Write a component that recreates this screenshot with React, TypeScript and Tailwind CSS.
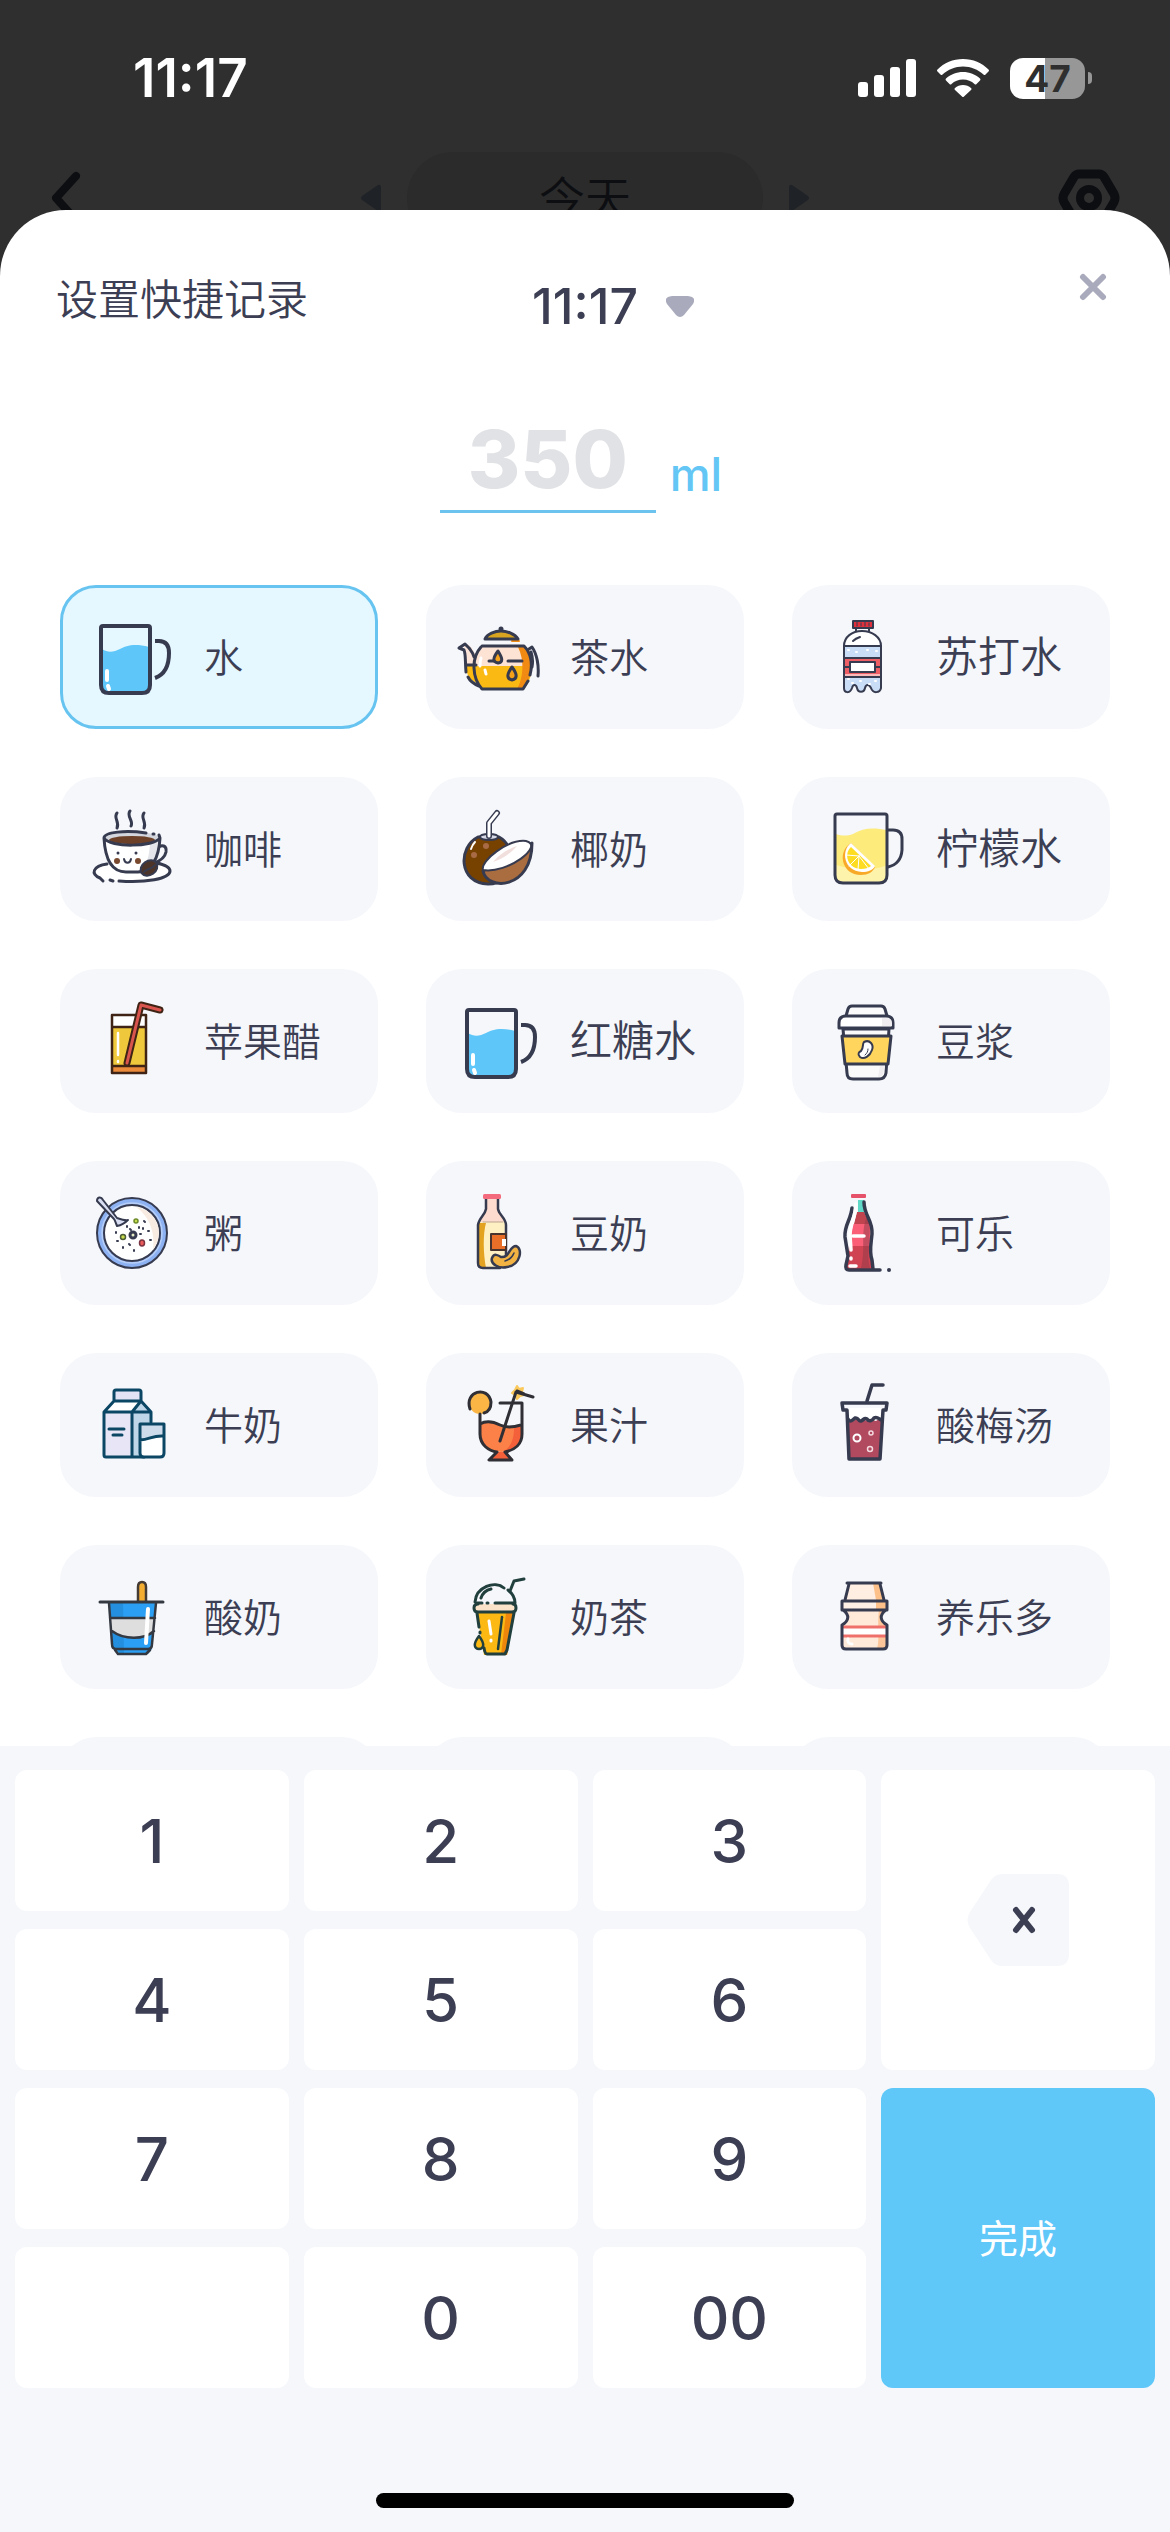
import { useState } from "react";
import type { ReactNode } from "react";
import { clsx } from "clsx";

const INK = "#373b50";

function Icon({ children }: { children: ReactNode }) {
  return (
    <svg
      viewBox="0 0 84 84"
      className="size-[84px] shrink-0"
      fill="none"
      strokeLinecap="round"
      strokeLinejoin="round"
      aria-hidden="true"
    >
      {children}
    </svg>
  );
}

function WaterIcon() {
  return (
    <Icon>
      <path d="M12 34c6 4 12 3 18 0s14-6 29-2v38q0 8-8 8H20q-8 0-8-8z" fill="#5ec6f8" />
      <path d="M11 13q0-2 2-2h45q2 0 2 2v57q0 8-8 8H19q-8 0-8-8z" stroke={INK} strokeWidth="4" />
      <path d="M65 26h4q10 0 10 12 0 20-14 25" stroke={INK} strokeWidth="4" strokeLinecap="butt" />
      <path d="M17 56v9M18 71l1 3" stroke="#fff" strokeWidth="4" />
    </Icon>
  );
}

function TeaIcon() {
  return (
    <Icon>
      <path d="M7 31c4 3 3 13 4 20h8V39c-2-5-5-9-8-10z" fill="#fbe3d8" />
      <path d="M10 51h9l4 18c-8-3-13-8-13-18z" fill="#fbb912" />
      <path d="M25 31h43c4 5 8 12 7 20H18c-1-8 3-15 7-20z" fill="#fde3d4" />
      <path d="M18 51h57c1 9-2 17-7 23H26c-5-6-8-14-8-23z" fill="#fbba13" />
      <path d="M62 32h6c7 8 9 17 6 27-1 6-4 11-7 15h-6c6-10 8-28 1-42z" fill="#f08a12" />
      <path d="M29 24c2-5 10-8 16-8s14 3 17 8z" fill="#d9a420" />
      <path d="M56 26h7" stroke="#f08a12" strokeWidth="2" />
      <path d="M29 24c2-5 10-8 16-8s14 3 17 8z" stroke={INK} strokeWidth="3" />
      <circle cx="45" cy="14" r="2.5" fill={INK} />
      <path d="M26 31h42c7 7 9 18 6 29M72 66l-5 8H26c-10-11-11-31-1-42" stroke={INK} strokeWidth="3" />
      <path d="M3 33l6-4 4 4c3 4 4 5 5 9M3 33l5 2c2 5 1 11 2 22M10 50h10M12 62c2 4 6 7 11 9" stroke={INK} strokeWidth="3" />
      <path d="M73 34l3-2c5 7 7 19 6 29M75 37c2 6 2 10 1 15" stroke={INK} strokeWidth="3" />
      <path d="M33 46h6M52 46h14" stroke={INK} strokeWidth="3" />
      <path d="M42 36c-6 8-5 11 0 12 5-1 5-4 0-12zM56 52c-6 8-5 12 0 13 5-1 6-5 0-13z" fill="#f5a21a" stroke={INK} strokeWidth="3" />
      <path d="M25 43c-1 3-1 5-1 8M29 55l1 4" stroke="#fff" strokeWidth="3" />
    </Icon>
  );
}

function SodaIcon() {
  return (
    <Icon>
      <path d="M22 31c0-9 8-15 18-15s19 6 19 15z" fill="#fff" />
      <path d="M22 31h37v42c-1 5-8 6-10 0-2-4-5-4-6 0-1 5-7 5-8 0-1-4-4-4-5 0-2 6-8 5-8 0z" fill="#c9ddf7" />
      <path d="M22 44h37v18H22z" fill="#ee5f65" />
      <path d="M22 60h37" stroke="#fbb8b8" strokeWidth="2" />
      <rect x="31" y="6" width="20" height="7" fill="#e0303c" stroke={INK} strokeWidth="2" />
      <path d="M35 7v4M39 8v3M43 7v4M47 8v3" stroke={INK} strokeWidth="1" />
      <path d="M34 13v3M47 13v3" stroke={INK} strokeWidth="2" />
      <path d="M22 31c0-9 8-15 18-15s19 6 19 15v42c-1 5-8 6-10 0-2-4-5-4-6 0-1 5-7 5-8 0-1-4-4-4-5 0-2 6-8 5-8 0z" stroke={INK} strokeWidth="2" />
      <path d="M22 31h37M22 43h37M22 62h37M22 52h6M53 52h6" stroke={INK} strokeWidth="2" />
      <rect x="28" y="47" width="25" height="10" fill="#fff" stroke={INK} strokeWidth="2" />
      <path d="M31 26c2-2 4-3 7-4" stroke={INK} strokeWidth="2" />
      <path d="M26 35h1M34 37h1M45 35h1M54 36h1M30 68h1M38 66h1M47 69h1M53 66h1M26 64h1" stroke="#fff" strokeWidth="2" />
    </Icon>
  );
}

function CoffeeIcon() {
  return (
    <Icon>
      <ellipse cx="42" cy="65" rx="38" ry="10" fill="#fff" />
      <path d="M13 74l-3-3C0 67 3 59 17 57M20 73l3 1M29 74c26 2 51-2 51-10 0-4-5-6-13-8" stroke={INK} strokeWidth="3" />
      <path d="M66 42c6-6 11-3 10 3-1 5-6 9-12 11" stroke={INK} strokeWidth="3" />
      <path d="M14 31c1 19 7 34 22 34h12c14 0 21-15 22-34z" fill="#fff" />
      <path d="M60 33h10c-1 18-8 32-20 32 8-8 10-20 10-32z" fill="#e3e5ea" />
      <ellipse cx="42" cy="31" rx="28" ry="6" fill="#d4d6dd" />
      <ellipse cx="42" cy="33" rx="23" ry="4" fill="#6d4128" />
      <path d="M14 31c1 19 7 34 22 34h12c14 0 21-15 22-34M56 26c-20-3-42-1-42 5 6 10 50 9 56 0l-1-3M63 27h1" stroke={INK} strokeWidth="3" />
      <path d="M27 6c-4 5 3 9 0 15M40 4c-4 5 4 10 1 15M54 6c-4 5 3 9 0 15" stroke={INK} strokeWidth="3" />
      <circle cx="28" cy="46" r="1.5" fill={INK} />
      <circle cx="46" cy="46" r="1.5" fill={INK} />
      <circle cx="27" cy="54" r="3" fill="#7a4a30" />
      <circle cx="48" cy="54" r="3" fill="#7a4a30" />
      <path d="M34 52c1 5 6 5 7 0" stroke={INK} strokeWidth="2" />
      <ellipse cx="59" cy="61" rx="9" ry="7" transform="rotate(-35 59 61)" fill="#4c3428" stroke={INK} strokeWidth="2" />
      <path d="M54 65c3-4 7-2 11-7" stroke={INK} strokeWidth="2" />
    </Icon>
  );
}

function CoconutIcon() {
  return (
    <Icon>
      <path d="M22 30C2 40 2 76 32 77c28 0 30-37 11-47z" fill="#774200" stroke={INK} strokeWidth="3" />
      <ellipse cx="33" cy="30" rx="9" ry="3" fill="#d7dae6" stroke={INK} strokeWidth="2" />
      <path d="M33 29V16l8-10" stroke={INK} strokeWidth="6" />
      <path d="M33 29V16l8-10" stroke="#fff" strokeWidth="3" />
      <path d="M15 42c1-3 2-5 4-7" stroke="#fff" strokeWidth="2" />
      <circle cx="30" cy="39" r="3" fill="#a86b45" />
      <circle cx="18" cy="48" r="3" fill="#a86b45" />
      <path d="M27 64C31 84 76 83 76 36z" fill="#a96d3f" stroke={INK} strokeWidth="3" />
      <path d="M27 63C24 54 52 32 70 34c19 5-19 33-43 29z" fill="#fff" stroke={INK} strokeWidth="2" />
      <path d="M37 55c7-8 15-13 24-16-7 8-15 13-24 16z" fill="#f1dfdd" />
    </Icon>
  );
}

function LemonIcon() {
  return (
    <Icon>
      <path d="M14 27c6 2 11 2 17 0 11-7 22-6 34-4v46q0 7-7 7H21q-7 0-7-7z" fill="#fdeb7c" />
      <path d="M14 58c12 4 36 7 51 0v11q0 7-7 7H21q-7 0-7-7z" fill="#fdf3ab" />
      <path d="M29 36C15 44 19 68 39 68c7 0 12-3 14-8z" fill="#f9a928" />
      <path d="M29 36C19 43 21 64 40 65c6 0 11-2 13-6z" fill="#fff" />
      <path d="M29 40c-8 7-3 22 10 22 4 0 8-1 10-3z" fill="#fddc22" />
      <path d="M37 49l-13-1M37 49L27 59M37 49l-1 14M37 49l10 13" stroke="#fff" strokeWidth="1" />
      <path d="M13 9q0-2 2-2h48q2 0 2 2v59q0 8-8 8H21q-8 0-8-8z" stroke={INK} strokeWidth="3" />
      <path d="M66 23h5q9 0 9 9v11q-1 14-14 17" stroke={INK} strokeWidth="3" />
    </Icon>
  );
}

function VinegarIcon() {
  return (
    <Icon>
      <rect x="22" y="16" width="34" height="12" fill="#fff" />
      <rect x="22" y="28" width="34" height="39" fill="#f0c83c" />
      <rect x="22" y="67" width="34" height="7" fill="#ea8a3a" />
      <path d="M22 16h34v58H22zM22 28h34M22 67h34" stroke="#3f2415" strokeWidth="2.5" />
      <path d="M37 64L51 6l19 5" stroke="#3f2415" strokeWidth="7" />
      <path d="M37 64L51 6l19 5" stroke="#d9544d" strokeWidth="3" />
      <path d="M28 34v22M28 62v1" stroke="#fff" strokeWidth="2.5" />
    </Icon>
  );
}

function SoyMilkIcon() {
  return (
    <Icon>
      <path d="M21 30h46l-3 44q-1 6-7 6H31q-6 0-6-6z" fill="#fafafa" stroke={INK} strokeWidth="3" />
      <path d="M20 37h49l-3 28H23z" fill="#ffd55e" stroke={INK} strokeWidth="3" />
      <path d="M24 17l2-7q1-3 4-3h29q3 0 4 3l2 7" fill="#fbfbfc" stroke={INK} strokeWidth="3" />
      <path d="M17 29v-5q0-7 7-7h40q7 0 7 7v5z" fill="#fff" stroke={INK} strokeWidth="3" />
      <path d="M60 19h4q6 0 6 5v3H60zM58 67h5l-2 8q-1 3-5 3z" fill="#efedef" />
      <path d="M42 43c6-3 10 3 8 8-2 6-8 10-12 7-3-3-1-5 1-6 3-3 1-7 3-9z" fill="#fff" stroke={INK} strokeWidth="2" />
      <path d="M46 50c0 3-1 4-3 6" stroke={INK} strokeWidth="1" />
    </Icon>
  );
}

function PorridgeIcon() {
  return (
    <Icon>
      <circle cx="42" cy="42" r="35" fill="#8db2f3" stroke={INK} strokeWidth="2" />
      <circle cx="42" cy="42" r="30" stroke="#b7cff8" strokeWidth="1.5" />
      <circle cx="42" cy="42" r="28" fill="#fff" stroke={INK} strokeWidth="2" />
      <path d="M46 16c20 3 30 25 17 43 2-16-2-32-17-43z" fill="#f8ece2" />
      <path d="M7 10c0-4 4-5 6-1l14 18c6 2 9 3 11 2-2 2-6 5-11 6-1-2-2-6-3-7z" fill="#d9def2" stroke={INK} strokeWidth="2" />
      <circle cx="43" cy="44" r="3" fill="#e6edc2" stroke={INK} strokeWidth="3" />
      <circle cx="46" cy="30" r="2" fill="#c6dc4c" stroke="#6c8a2a" strokeWidth="1.5" />
      <circle cx="33" cy="46" r="2.5" fill="#c6dc4c" stroke="#4c5b36" strokeWidth="1.5" />
      <ellipse cx="52" cy="52" rx="2.5" ry="3" fill="#ea5a5a" stroke="#7a3340" strokeWidth="1.5" />
      <path d="M37 35v1M40 38l1 1M54 30l1 1M49 36v1M58 40h1M26 41v1M27 50h1M33 56v1M39 53l1 1M44 59v1M60 49h1M50 43h1M53 37v1" stroke={INK} strokeWidth="2" />
    </Icon>
  );
}

function SoyBottleIcon() {
  return (
    <Icon>
      <path d="M30 8h12v10c1 6 6 9 7 15H23c1-6 6-9 7-15z" fill="#fddccf" />
      <path d="M23 31h27v41q0 5-5 5H27q-5 0-5-5z" fill="#fff0c4" />
      <path d="M23 32h7c-3 10-3 30 0 45h-3q-5 0-5-5z" fill="#e3a320" />
      <path d="M30 8v10c-1 6-7 9-8 16v38q0 5 5 5h17M42 8v10c1 6 8 9 8 16v32" stroke={INK} strokeWidth="2.5" />
      <path d="M27 31h20" stroke="#bba58e" strokeWidth="1" />
      <path d="M35 43h15v16H35z" fill="#e96e28" stroke="#49332f" strokeWidth="2" />
      <path d="M46 48h4v7h-4z" fill="#fff" />
      <rect x="27" y="3" width="18" height="5" rx="1.5" fill="#f36b7c" />
      <path d="M60 55c7 2 5 19-9 21-8 2-17-3-15-9 2-5 6-3 9-1 9 1 8-11 15-11z" fill="#f2b343" stroke={INK} strokeWidth="2.5" />
      <path d="M58 62c-2 5-5 7-9 8" stroke={INK} strokeWidth="1.5" />
    </Icon>
  );
}

function ColaIcon() {
  return (
    <Icon>
      <path d="M36 9h6v12h-6z" fill="#61d9c8" />
      <path d="M35 21h7l6 12H32z" fill="#c04450" />
      <path d="M31 33h17l1 22H27z" fill="#fb5f78" />
      <path d="M27 55h22l2 23H24z" fill="#d04352" />
      <path d="M45 24c7 17-2 33 3 53h-9c5-20-1-34 6-53z" fill="#963d49" opacity=".55" />
      <path d="M30 17c-1 12-8 17-7 29l3 19-2 9q-1 5 3 5h31M42 11c0 14 9 18 8 32-1 11-3 17 0 26l1 9" stroke={INK} strokeWidth="3.5" />
      <path d="M34 13c0 12-6 20-6 31l1 15M31 45h11M29 67v1M28 75h6" stroke="#fff" strokeWidth="3.5" />
      <rect x="29" y="3" width="15" height="4" rx="1" fill="#e6526a" />
      <circle cx="67" cy="79" r="2" fill={INK} />
    </Icon>
  );
}

function MilkIcon() {
  return (
    <Icon>
      <path d="M24 8h27v10H24z" fill="#e3e3f5" />
      <path d="M23 18h28l11 11v45H42V29H13z" fill="#bfd6e8" />
      <path d="M24 18h26l-8 11H14z" fill="#fff" />
      <path d="M14 29h28v45H14z" fill="#e8e6f6" />
      <path d="M24 17v-8q0-2 2-2h23q2 0 2 2v9H24L14 29v43q0 2 2 2h26V29H14M51 18L42 29M51 18l10 11v10M42 29h19M42 74h12" stroke="#0b4664" strokeWidth="3" />
      <path d="M19 46h15M23 52h9" stroke="#0b4664" strokeWidth="3" />
      <path d="M50 41h24v29q0 4-4 4H54q-4 0-4-4z" fill="#cddbea" />
      <path d="M50 57c10 0 12-5 24-4v17q0 4-4 4H54q-4 0-4-4z" fill="#fff" />
      <path d="M50 41h24v29q0 4-4 4H54q-4 0-4-4zM50 57c10 0 12-5 24-4" stroke="#0b4664" strokeWidth="3" />
    </Icon>
  );
}

function JuiceIcon() {
  return (
    <Icon>
      <circle cx="24" cy="20" r="11" fill="#fbb545" />
      <path d="M14 26c-6-18 18-24 21-7 0 7-3 10-7 11" stroke="#2f2f35" strokeWidth="3" />
      <path d="M24 42c7-5 14-2 20 1s14 2 21 0v8c0 12-9 17-20 18-12-1-21-8-21-18z" fill="#fb8148" />
      <path d="M58 44h7v9c0 9-7 15-18 16 9-6 11-14 11-25z" fill="#f4603a" />
      <path d="M41 69h8l7 8H33z" fill="#f4603a" />
      <path d="M24 31v20c0 11 9 17 17 18l-8 8h23l-7-8c10-2 17-8 17-18V20H44M24 41c7-4 14-2 20 1s14 2 21 0" stroke="#2f2f35" strokeWidth="3" />
      <path d="M61 3l2 3 4-1-1 4 2 3-4 1-3 3-2-4-3-2 3-3z" fill="#fbc95b" stroke="#fbc95b" strokeWidth="2" />
      <path d="M44 58L60 9l17 5M61 8l7 3" stroke="#2f2f35" strokeWidth="3" />
    </Icon>
  );
}

function PlumIcon() {
  return (
    <Icon>
      <path d="M25 25h36l-3 52H27z" fill="#fff" />
      <path d="M25 38c3-3 4 1 7 0 4-5 5 1 7 0 4-3 5 1 8 0 3-4 5 0 7 0 2-2 4-2 6 0l-2 39H27z" fill="#b1495f" />
      <path d="M20 20h45l-1 7h-3l-3 49H27l-2-49h-4zM26 36c2 4 5 1 7-1 4-1 3 4 6 3 3-1 3-4 6-2 2 3 5 2 7-1 3-2 5 1 7 2" stroke={INK} strokeWidth="3.5" />
      <path d="M45 18l5-16h11" stroke={INK} strokeWidth="3.5" />
      <circle cx="35" cy="55" r="3.5" stroke="#fff" strokeWidth="2" />
      <circle cx="49" cy="50" r="2" stroke="#f4d9df" strokeWidth="1.5" />
      <circle cx="48" cy="66" r="2.5" stroke="#f4d9df" strokeWidth="1.5" />
    </Icon>
  );
}

function YogurtIcon() {
  return (
    <Icon>
      <path d="M48 26V12q0-5 4-5t4 5v14" fill="#f3ae32" stroke="#453b35" strokeWidth="2.5" />
      <path d="M19 28h47l-4 46-4 5H30l-5-5-3-2z" fill="#2b9ff3" />
      <path d="M20 28h13l1 50h-6l-5-5z" fill="#1878be" opacity=".4" />
      <path d="M20 43h45l-1 13c-10 9-32 8-42 0z" fill="#dededf" />
      <path d="M19 28l3 41q0 5 4 5h32q4 0 4-5l4-41M20 43h45M22 56c12 9 32 9 42 0M25 75l3 4h28l4-4" stroke="#343941" strokeWidth="2.5" />
      <path d="M10 27h63" stroke="#343941" strokeWidth="3" />
      <path d="M58 34l-2 34" stroke="#fff" strokeWidth="4" />
    </Icon>
  );
}

function MilkTeaIcon() {
  return (
    <Icon>
      <path d="M21 38h37l-7 42H28z" fill="#fcb913" />
      <path d="M50 38h8l-7 42h-6z" fill="#ef870d" />
      <rect x="18" y="29" width="43" height="8" rx="4" fill="#fbe3c9" />
      <path d="M19 27c1-15 20-22 29-14M52 15c5 4 7 8 7 13H39M31 28h1M21 28h5M25 23c2-6 5-8 10-9" stroke="#203f3d" strokeWidth="3" />
      <path d="M54 16l4-10 10-2" stroke="#203f3d" strokeWidth="3" />
      <path d="M22 29q-4 0-4 4t4 4h34q4 0 4-4t-3-4M21 38l2 14M24 57v1M28 73q1 6 3 6h18l2-4 7-37" stroke="#203f3d" strokeWidth="3" />
      <path d="M46 42l-4 32" stroke="#203f3d" strokeWidth="2.5" />
      <path d="M33 46l2 13M35 65v1" stroke="#fff" strokeWidth="3" />
      <path d="M23 61c-7 9-4 13 0 13s7-4 0-13z" fill="#fcb913" stroke="#203f3d" strokeWidth="2.5" />
    </Icon>
  );
}

function YakultIcon() {
  return (
    <Icon>
      <path d="M26 8h33l3 17H22z" fill="#ffeee1" />
      <path d="M51 8h7l3 17h-7z" fill="#fdc089" />
      <path d="M21 35h43c-8 5-8 11 0 15v21q0 2-3 3H23q-3-1-3-3V50c7-4 8-10 1-15z" fill="#ffead9" />
      <path d="M57 35h6c-7 6-6 11 1 15v21q0 3-4 3h-5c3-10 0-27 2-39z" fill="#fcc69a" />
      <path d="M20 52h45v9H20z" fill="#fff" />
      <path d="M20 52h45M20 61h45" stroke="#ef706b" strokeWidth="3" strokeLinecap="butt" />
      <rect x="20" y="26" width="45" height="9" fill="#fff0e5" />
      <path d="M54 26h10v9H54z" fill="#fdc089" />
      <path d="M26 64c-1 3 1 5 4 5" stroke="#fff" strokeWidth="3" />
      <path d="M25 8h34M27 9l-4 16M58 9l4 16M20 26h45v9H20zM21 35c7 5 6 11-1 15v20q0 4 4 4h37q4 0 4-4V50c-7-4-8-10-1-15" stroke={INK} strokeWidth="3" />
    </Icon>
  );
}

type Drink = { name: string; icon: () => ReactNode; wide?: boolean };

const drinks: Drink[] = [
  { name: "水", icon: WaterIcon },
  { name: "茶水", icon: TeaIcon },
  { name: "苏打水", icon: SodaIcon, wide: true },
  { name: "咖啡", icon: CoffeeIcon },
  { name: "椰奶", icon: CoconutIcon },
  { name: "柠檬水", icon: LemonIcon, wide: true },
  { name: "苹果醋", icon: VinegarIcon },
  { name: "红糖水", icon: WaterIcon, wide: true },
  { name: "豆浆", icon: SoyMilkIcon },
  { name: "粥", icon: PorridgeIcon },
  { name: "豆奶", icon: SoyBottleIcon },
  { name: "可乐", icon: ColaIcon },
  { name: "牛奶", icon: MilkIcon },
  { name: "果汁", icon: JuiceIcon },
  { name: "酸梅汤", icon: PlumIcon },
  { name: "酸奶", icon: YogurtIcon },
  { name: "奶茶", icon: MilkTeaIcon },
  { name: "养乐多", icon: YakultIcon },
];

const keys = ["1", "2", "3", "4", "5", "6", "7", "8", "9", "", "0", "00"];

function StatusBar() {
  return (
    <div className="flex h-[152px] items-center justify-between pt-1 pr-[78px] pl-[133px] text-white">
      <span className="text-[53px] leading-none font-semibold">11:17</span>
      <div className="flex items-center gap-[21px]">
        <svg viewBox="0 0 58 38" className="h-[38px] w-[58px]" fill="currentColor" aria-hidden="true">
          <rect x="0" y="23" width="10" height="15" rx="3" />
          <rect x="16" y="16" width="10" height="22" rx="3" />
          <rect x="32" y="8" width="10" height="30" rx="3" />
          <rect x="48" y="0" width="10" height="38" rx="3" />
        </svg>
        <svg viewBox="0 0 52 38" className="h-[38px] w-[52px]" fill="currentColor" aria-hidden="true">
          <path d="M26 0C36 0 45 4 51.500 10.500q1 1 0 2L48.500 15.500q-1 1-2 0C41 10.500 34 7.500 26 7.500S11 10.500 5.500 15.500q-1 1-2 0L.5 12.500q-1-1 0-2C7 4 16 0 26 0z" />
          <path d="M26 13c6.500 0 12.500 2.500 17 6.500q1 1 0 2l-3.500 3.500q-1 1-2 0c-3-2.800-7-4.500-11.500-4.500S17.500 22.200 14.500 25q-1 1-2 0L9 21.500q-1-1 0-2C13.500 15.500 19.500 13 26 13z" />
          <path d="M26 26c3 0 6 1 8 3q1 1 0 2l-7 6.500q-1 1-2 0L18 31q-1-1 0-2c2-2 5-3 8-3z" />
        </svg>
        <div className="flex items-center gap-[3px]">
          <div className="flex h-[41px] w-[75px] items-center justify-center rounded-[13px] bg-linear-to-r from-white from-47% to-[#979797] to-47% text-[37px] leading-none font-bold text-[#2f2f2f]">
            47
          </div>
          <div className="h-3 w-1 rounded-r-full bg-[#979797]" />
        </div>
      </div>
    </div>
  );
}

function DayNav() {
  return (
    <div className="flex h-[92px] items-center justify-between px-[50px] text-[#0d0e12]">
      <button type="button" aria-label="返回" className="w-[62px]">
        <svg viewBox="0 0 32 56" className="h-14 w-8" fill="none" stroke="currentColor" strokeWidth="8" strokeLinecap="round" strokeLinejoin="round">
          <path d="M26 6L6 28l20 22" />
        </svg>
      </button>
      <div className="flex items-center gap-[26px]">
        <button type="button" aria-label="前一天">
          <svg viewBox="0 0 21 28" className="h-7 w-[21px]" fill="#1f2327">
            <path d="M18 1q3-1 3 2v22q0 3-3 2L2 16q-2-2 0-4z" />
          </svg>
        </button>
        <button type="button" className="h-[92px] w-[356px] rounded-[46px] bg-[#2b2b2b] text-[46px] leading-none font-[350]">
          今天
        </button>
        <button type="button" aria-label="后一天">
          <svg viewBox="0 0 21 28" className="h-7 w-[21px]" fill="#1f2327">
            <path d="M3 1Q0 0 0 3v22q0 3 3 2l16-11q2-2 0-4z" />
          </svg>
        </button>
      </div>
      <button type="button" aria-label="设置">
        <svg viewBox="0 0 62 60" className="h-[60px] w-[62px]" fill="none" stroke="currentColor">
          <path d="M21 6h20q3 0 5 3l10 17q2 4 0 8L46 51q-2 3-5 3H21q-3 0-5-3L6 34q-2-4 0-8L16 9q2-3 5-3z" strokeWidth="9" />
          <circle cx="31" cy="30" r="9" strokeWidth="8" />
        </svg>
      </button>
    </div>
  );
}

export default function App() {
  const [selected, setSelected] = useState(0);
  const [amount, setAmount] = useState("");

  return (
    <div className="flex h-screen flex-col overflow-hidden bg-[#2f2f2f] font-[Inter,'Noto_Sans_CJK_SC',sans-serif] text-[#3c3e53]">
      <StatusBar />
      <DayNav />

      <main className="relative -mt-[34px] flex min-h-0 flex-1 flex-col overflow-hidden rounded-t-[66px] bg-white">
        <header className="grid grid-cols-[1fr_auto_1fr] items-start px-14 pt-14">
          <h1 className="flex h-[68px] items-center text-[42px] leading-none font-[350]">设置快捷记录</h1>
          <button type="button" className="flex h-20 items-center gap-7 pl-14 text-[50px] leading-none font-medium">
            11:17
            <svg viewBox="0 0 28 21" className="h-[21px] w-7" fill="#a9abbd" aria-hidden="true">
              <path d="M6 0h16q9 1 5 8l-9 11q-4 4-8 0L1 8Q-3 1 6 0z" />
            </svg>
          </button>
          <button type="button" aria-label="关闭" className="flex size-[42px] items-center justify-center justify-self-end">
            <svg viewBox="0 0 28 28" className="size-7" fill="none" stroke="#a9abbd" strokeWidth="6" strokeLinecap="round">
              <path d="M4 4l20 20M24 4L4 24" />
            </svg>
          </button>
        </header>

        <label className="mt-15 flex items-end justify-center gap-3.5 pr-2">
          <input
            type="text"
            inputMode="numeric"
            aria-label="饮水量"
            placeholder="350"
            value={amount}
            onChange={(e) => setAmount(e.target.value)}
            className="h-[107px] w-[216px] border-b-3 border-[#6cc4ee] text-center text-[80px] leading-none font-extrabold outline-none placeholder:text-[#e1e2e5]"
          />
          <span className="pb-4 text-[46px] leading-none font-medium text-[#63c6f5]">ml</span>
        </label>

        <section className="mt-18 grid min-h-0 flex-1 auto-rows-[144px] grid-cols-3 gap-12 overflow-hidden px-15">
          {drinks.map(({ name, icon: DrinkIcon, wide }, i) => (
            <button
              key={name}
              type="button"
              aria-pressed={i === selected}
              onClick={() => setSelected(i)}
              className={clsx(
                "flex items-center gap-[30px] rounded-[36px] border-3 px-[27px] leading-none font-[350] whitespace-nowrap",
                i === selected ? "border-[#67c4f0] bg-[#e5f7ff]" : "border-[#f5f7fb] bg-[#f5f7fb]",
                wide ? "text-[42px]" : "text-[39px]",
              )}
            >
              <DrinkIcon />
              {name}
            </button>
          ))}
          {/* next row peeks out above the keypad */}
          <div className="rounded-[36px] bg-[#f5f7fb]" />
          <div className="rounded-[36px] bg-[#f5f7fb]" />
          <div className="rounded-[36px] bg-[#f5f7fb]" />
        </section>
      </main>

      <footer className="shrink-0 bg-[#f5f7fb] px-[15px] pt-6 pb-6">
        <div className="grid grid-cols-4 gap-x-[15px] gap-y-[18px]">
          <div className="col-span-3 grid auto-rows-[141px] grid-cols-3 gap-x-[15px] gap-y-[18px]">
            {keys.map((k) => (
              <button
                key={k}
                type="button"
                disabled={!k}
                onClick={() => setAmount((v) => v + k)}
                className="rounded-xl bg-white text-[60px] leading-none font-medium"
              >
                {k}
              </button>
            ))}
          </div>
          <div className="grid grid-rows-2 gap-[18px]">
            <button
              type="button"
              aria-label="删除"
              onClick={() => setAmount((v) => v.slice(0, -1))}
              className="flex items-center justify-center rounded-xl bg-white"
            >
              <svg viewBox="0 0 102 92" className="h-[92px] w-[102px]" fill="none">
                <path d="M36 0h54q12 0 12 12v68q0 12-12 12H36q-8 0-12-6L3 54q-5-8 0-16L24 6q4-6 12-6z" fill="#f5f7fb" />
                <path d="M49 36l16 20M65 36L49 56" stroke="#3c3e53" strokeWidth="6" strokeLinecap="round" />
              </svg>
            </button>
            <button type="button" className="rounded-xl bg-[#60c7f9] text-[39px] leading-none text-white">
              完成
            </button>
          </div>
        </div>
        <div className="mx-auto mt-[105px] h-[15px] w-[418px] rounded-full bg-black" />
      </footer>
    </div>
  );
}
